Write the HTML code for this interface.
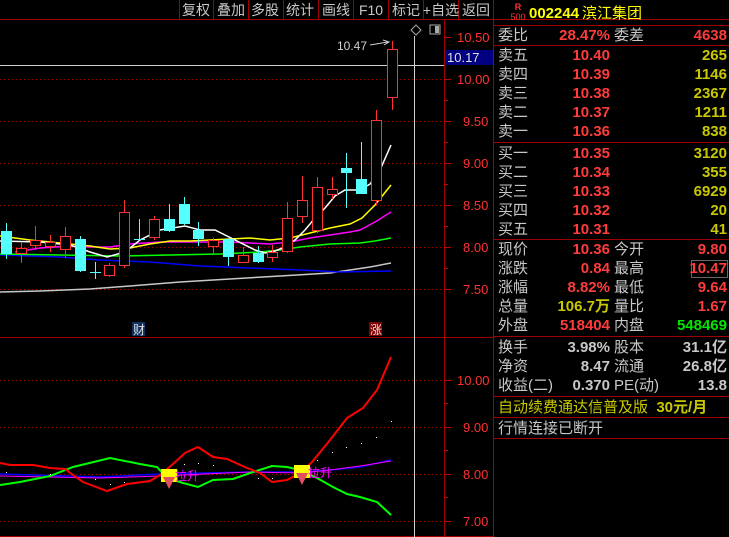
<!DOCTYPE html>
<html><head><meta charset="utf-8"><style>
*{margin:0;padding:0}
body{width:729px;height:537px;background:#000;overflow:hidden;position:relative;font-family:"Liberation Sans","Noto Sans CJK SC",sans-serif}
svg{position:absolute;left:0;top:0}
.r{position:absolute;left:494px;width:235px;height:19px;font-size:15px;line-height:19px;color:#c8c8c8}
.r span{position:absolute;white-space:nowrap}
.l1{left:4px}.v1{right:119px;text-align:right}.l2{left:120px}.v2{right:2px;text-align:right}
.red{color:#ff3c3c}.yel{color:#c8c800}.grn{color:#00e600}
.b{font-weight:bold}
</style></head><body>
<svg width="729" height="537" xmlns="http://www.w3.org/2000/svg" font-family="Liberation Sans, Noto Sans CJK SC, sans-serif">
<g stroke="#a00000" stroke-width="1">
<line x1="0" y1="19.5" x2="729" y2="19.5"/>
<line x1="179.5" y1="0" x2="179.5" y2="19"/><line x1="213.5" y1="0" x2="213.5" y2="19"/>
<line x1="248.5" y1="0" x2="248.5" y2="19"/><line x1="283.5" y1="0" x2="283.5" y2="19"/>
<line x1="318.5" y1="0" x2="318.5" y2="19"/><line x1="353.5" y1="0" x2="353.5" y2="19"/>
<line x1="388.5" y1="0" x2="388.5" y2="19"/><line x1="423.5" y1="0" x2="423.5" y2="19"/>
<line x1="458.5" y1="0" x2="458.5" y2="19"/><line x1="493.5" y1="0" x2="493.5" y2="537"/>
<line x1="444.5" y1="19" x2="444.5" y2="537"/>
<line x1="0" y1="337.5" x2="494" y2="337.5"/>
<line x1="0" y1="536.5" x2="494" y2="536.5"/>
</g>
<g fill="#c8c8c8" font-size="14" text-anchor="middle">
<text x="196" y="15">复权</text><text x="231" y="15">叠加</text><text x="265" y="15">多股</text>
<text x="300" y="15">统计</text><text x="336" y="15">画线</text><text x="371" y="15">F10</text>
<text x="406" y="15">标记</text><text x="441" y="15">+自选</text><text x="476" y="15">返回</text>
</g>
<g stroke="#a00000" stroke-dasharray="1,3">
<line x1="0" y1="79.5" x2="444" y2="79.5"/><line x1="0" y1="121.5" x2="444" y2="121.5"/>
<line x1="0" y1="163.5" x2="444" y2="163.5"/><line x1="0" y1="205.5" x2="444" y2="205.5"/>
<line x1="0" y1="247.5" x2="444" y2="247.5"/><line x1="0" y1="289.5" x2="444" y2="289.5"/>
<line x1="0" y1="380.5" x2="444" y2="380.5"/><line x1="0" y1="427.5" x2="444" y2="427.5"/>
<line x1="0" y1="474.5" x2="444" y2="474.5"/><line x1="0" y1="521.5" x2="444" y2="521.5"/>
</g>
<g fill="#ff3232" font-size="13">
<text x="457" y="42">10.50</text><text x="457" y="84">10.00</text><text x="463" y="126">9.50</text>
<text x="463" y="168">9.00</text><text x="463" y="210">8.50</text><text x="463" y="252">8.00</text>
<text x="463" y="294">7.50</text>
<text x="457" y="385">10.00</text><text x="463" y="432">9.00</text><text x="463" y="479">8.00</text><text x="463" y="526">7.00</text>
</g>
<g stroke="#c00000">
<line x1="444" y1="37.5" x2="451" y2="37.5"/><line x1="444" y1="79.5" x2="451" y2="79.5"/><line x1="444" y1="100.5" x2="448" y2="100.5"/>
<line x1="444" y1="121.5" x2="451" y2="121.5"/><line x1="444" y1="142.5" x2="448" y2="142.5"/><line x1="444" y1="163.5" x2="451" y2="163.5"/>
<line x1="444" y1="184.5" x2="448" y2="184.5"/><line x1="444" y1="205.5" x2="451" y2="205.5"/><line x1="444" y1="226.5" x2="448" y2="226.5"/>
<line x1="444" y1="247.5" x2="451" y2="247.5"/><line x1="444" y1="268.5" x2="448" y2="268.5"/><line x1="444" y1="289.5" x2="451" y2="289.5"/>
<line x1="444" y1="380.5" x2="451" y2="380.5"/><line x1="444" y1="403.5" x2="448" y2="403.5"/><line x1="444" y1="427.5" x2="451" y2="427.5"/>
<line x1="444" y1="450.5" x2="448" y2="450.5"/><line x1="444" y1="474.5" x2="451" y2="474.5"/><line x1="444" y1="497.5" x2="448" y2="497.5"/><line x1="444" y1="521.5" x2="451" y2="521.5"/>
</g>
<rect x="445" y="50" width="48" height="15" fill="#000080"/>
<text x="447" y="62" fill="#e0e0e0" font-size="13">10.17</text>
<line x1="0" y1="65.5" x2="444" y2="65.5" stroke="#d0d0d0"/>
<line x1="414.5" y1="36" x2="414.5" y2="537" stroke="#d0d0d0"/>
<path d="M416 25 L421 30 L416 35 L411 30Z" fill="none" stroke="#aaa"/>
<rect x="430" y="25" width="10" height="9" fill="none" stroke="#aaa"/><rect x="435" y="26" width="4" height="7" fill="#aaa"/>
<text x="337" y="50" fill="#d0d0d0" font-size="12">10.47</text>
<path d="M370 45 L388 42 M383 40 L389 42 L384 45" stroke="#d0d0d0" fill="none"/>
<g fill="none" stroke-width="1.5">
<polyline stroke="#c8c8c8" points="0,292 40,291 90,289 130,286 180,282 230,279 280,276 330,273 370,267 391,263"/>
<polyline stroke="#0000ff" points="0,255 60,257 100,260 150,262 200,266 250,268 300,270 340,272 391,271"/>
<polyline stroke="#00ff00" points="0,254 60,255 120,256 170,255 220,254 260,252 280,250 300,247 330,244 360,243 375,241 391,238"/>
<polyline stroke="#ff00ff" points="15,252 40,248 70,246 90,247 110,247 130,244 160,242 180,242 200,242 230,242 250,243 270,244 290,242 310,238 330,235 350,232 360,230 375,222 391,212"/>
<polyline stroke="#ffff00" points="0,236 30,240 60,243 90,246 110,249 130,248 150,244 170,241 190,241 230,239 250,238 270,240 290,238 310,233 330,228 350,224 362,218 375,205 391,185"/>
<polyline stroke="#ffffff" points="0,241 40,242 70,245 90,252 107,257 125,252 140,240 160,230 185,226 200,230 215,230 235,240 255,250 265,253 275,251 285,247 295,240 305,230 315,218 325,208 335,196 345,190 360,190 370,184 380,170 391,145"/>
</g>
<g stroke="#ff3232" fill="#000">
<path d="M21.5 242V263M35.5 226V250M50.5 235V252M65.5 227V258M109.5 263V277M124.5 200V268M154.5 216V240M213.5 238V254M243.5 247V263M272.5 245V262M287.5 202V253M302.5 176V223M317.5 177V233M332.5 177V199M376.5 110V205M392.5 41V110"/>
<rect x="16.5" y="248.5" width="10" height="5"/><rect x="30.5" y="240.5" width="10" height="5"/>
<rect x="45.5" y="242.5" width="10" height="4"/><rect x="60.5" y="236.5" width="10" height="13"/>
<rect x="104.5" y="265.5" width="10" height="10"/><rect x="119.5" y="212.5" width="10" height="53"/>
<rect x="149.5" y="219.5" width="10" height="18"/><rect x="208.5" y="240.5" width="10" height="6"/>
<rect x="238.5" y="255.5" width="10" height="7"/><rect x="267.5" y="252.5" width="10" height="5"/>
<rect x="282.5" y="218.5" width="10" height="33"/><rect x="297.5" y="200.5" width="10" height="16"/>
<rect x="312.5" y="187.5" width="10" height="43"/><rect x="327.5" y="189.5" width="10" height="5"/>
<rect x="371.5" y="120.5" width="10" height="80"/><rect x="387.5" y="49.5" width="10" height="48"/>
</g>
<g stroke="#54ffff" fill="#54ffff">
<path d="M6.5 223V259M80.5 236V272M95.5 262V279M90 272.5H101M139.5 219V240M134 239.5H145M169.5 204V232M184.5 197V225M198.5 222V246M228.5 239V266M258.5 246V263M346.5 153V208M361.5 142V194"/>
<rect x="1.5" y="231.5" width="10" height="22"/><rect x="75.5" y="239.5" width="10" height="31"/>
<rect x="164.5" y="219.5" width="10" height="11"/><rect x="179.5" y="204.5" width="10" height="19"/>
<rect x="193.5" y="230.5" width="10" height="8"/><rect x="223.5" y="239.5" width="10" height="17"/>
<rect x="253.5" y="253.5" width="10" height="8"/><rect x="341.5" y="168.5" width="10" height="4"/>
<rect x="356.5" y="179.5" width="10" height="14"/>
</g>
<rect x="132" y="322" width="13" height="14" fill="#103060"/><text x="133" y="334" fill="#e0e0e0" font-size="12">财</text>
<rect x="369" y="322" width="13" height="14" fill="#800000"/><text x="370" y="334" fill="#e0e0e0" font-size="12">涨</text>
<g fill="none" stroke-width="2">
<polyline stroke="#0000ff" stroke-width="1.5" points="0,474 100,477 160,474 250,472 300,472 330,470 360,467 391,460"/>
<polyline stroke="#ff00ff" stroke-width="1" points="0,476 100,478 160,476 250,472 300,473 330,470 360,466 391,461"/>
<polyline stroke="#00ff00" points="0,485 20,482 50,476 73,467 110,458 140,464 157,467 167,478 183,483 198,487 213,480 233,479 253,472 272,466 287,467 300,470 317,478 333,487 347,494 360,497 377,502 391,515"/>
<polyline stroke="#ff0000" points="0,463 10,465 33,465 50,468 65,469 73,475 83,482 107,491 127,484 150,481 160,475 173,464 185,453 198,447 213,457 227,459 247,468 260,473 272,482 287,480 300,473 312,462 330,440 347,418 363,408 377,390 391,357"/>
</g>
<g fill="#fff"><rect x="6" y="472" width="1" height="1"/><rect x="50" y="474" width="1" height="1"/><rect x="95" y="479" width="1" height="1"/><rect x="110" y="484" width="1" height="1"/><rect x="124" y="482" width="1" height="1"/><rect x="184" y="464" width="1" height="1"/><rect x="198" y="463" width="1" height="1"/><rect x="213" y="465" width="1" height="1"/><rect x="258" y="478" width="1" height="1"/><rect x="272" y="478" width="1" height="1"/><rect x="317" y="460" width="1" height="1"/><rect x="332" y="452" width="1" height="1"/><rect x="346" y="447" width="1" height="1"/><rect x="361" y="443" width="1" height="1"/><rect x="376" y="437" width="1" height="1"/><rect x="391" y="421" width="1" height="1"/></g>
<rect x="161" y="469" width="16" height="13" fill="#ffff00"/><rect x="294" y="465" width="16" height="13" fill="#ffff00"/>
<path d="M163 477H175L169 489Z" fill="#e05060"/><path d="M296 473H308L302 485Z" fill="#e05060"/>
<text x="175" y="480" fill="#ff00ff" font-size="12">拉升</text><text x="308" y="477" fill="#ff00ff" font-size="12">拉升</text>
<g stroke="#a00000">
<line x1="494" y1="25.5" x2="729" y2="25.5"/><line x1="494" y1="45.5" x2="729" y2="45.5"/>
<line x1="494" y1="142.5" x2="729" y2="142.5"/><line x1="494" y1="239.5" x2="729" y2="239.5"/>
<line x1="494" y1="336.5" x2="729" y2="336.5"/><line x1="494" y1="396.5" x2="729" y2="396.5"/>
<line x1="494" y1="417.5" x2="729" y2="417.5"/><line x1="494" y1="438.5" x2="729" y2="438.5"/>
</g>
<rect x="691.5" y="260.5" width="36" height="17" fill="none" stroke="#666"/>
<text x="518" y="10" fill="#ff3232" font-size="9" font-weight="bold" text-anchor="middle">R</text>
<text x="518" y="20" fill="#ff3232" font-size="9" text-anchor="middle">500</text>
<text x="529" y="18" fill="#ffff00" font-size="15" font-weight="bold">002244</text>
<text x="582" y="18" fill="#ffff00" font-size="15">滨江集团</text>
</svg>
<div class="r" style="top:26px"><span class="l1">委比</span><span class="v1 red b">28.47%</span><span class="l2">委差</span><span class="v2 red b">4638</span></div>
<div class="r" style="top:46px"><span class="l1">卖五</span><span class="v1 red b">10.40</span><span class="v2 yel b">265</span></div>
<div class="r" style="top:65px"><span class="l1">卖四</span><span class="v1 red b">10.39</span><span class="v2 yel b">1146</span></div>
<div class="r" style="top:84px"><span class="l1">卖三</span><span class="v1 red b">10.38</span><span class="v2 yel b">2367</span></div>
<div class="r" style="top:103px"><span class="l1">卖二</span><span class="v1 red b">10.37</span><span class="v2 yel b">1211</span></div>
<div class="r" style="top:122px"><span class="l1">卖一</span><span class="v1 red b">10.36</span><span class="v2 yel b">838</span></div>
<div class="r" style="top:144px"><span class="l1">买一</span><span class="v1 red b">10.35</span><span class="v2 yel b">3120</span></div>
<div class="r" style="top:163px"><span class="l1">买二</span><span class="v1 red b">10.34</span><span class="v2 yel b">355</span></div>
<div class="r" style="top:182px"><span class="l1">买三</span><span class="v1 red b">10.33</span><span class="v2 yel b">6929</span></div>
<div class="r" style="top:201px"><span class="l1">买四</span><span class="v1 red b">10.32</span><span class="v2 yel b">20</span></div>
<div class="r" style="top:220px"><span class="l1">买五</span><span class="v1 red b">10.31</span><span class="v2 yel b">41</span></div>
<div class="r" style="top:240px"><span class="l1">现价</span><span class="v1 red b">10.36</span><span class="l2">今开</span><span class="v2 red b">9.80</span></div>
<div class="r" style="top:259px"><span class="l1">涨跌</span><span class="v1 red b">0.84</span><span class="l2">最高</span><span class="v2 red b">10.47</span></div>
<div class="r" style="top:278px"><span class="l1">涨幅</span><span class="v1 red b">8.82%</span><span class="l2">最低</span><span class="v2 red b">9.64</span></div>
<div class="r" style="top:297px"><span class="l1">总量</span><span class="v1 yel b">106.7万</span><span class="l2">量比</span><span class="v2 red b">1.67</span></div>
<div class="r" style="top:316px"><span class="l1">外盘</span><span class="v1 red b">518404</span><span class="l2">内盘</span><span class="v2 grn b">548469</span></div>
<div class="r" style="top:338px"><span class="l1">换手</span><span class="v1 b">3.98%</span><span class="l2">股本</span><span class="v2 b">31.1亿</span></div>
<div class="r" style="top:357px"><span class="l1">净资</span><span class="v1 b">8.47</span><span class="l2">流通</span><span class="v2 b">26.8亿</span></div>
<div class="r" style="top:376px"><span class="l1">收益(二)</span><span class="v1 b">0.370</span><span class="l2">PE(动)</span><span class="v2 b">13.8</span></div>
<div class="r yel" style="top:398px"><span class="l1">自动续费通达信普及版&nbsp; <b>30元/月</b></span></div>
<div class="r" style="top:419px"><span class="l1">行情连接已断开</span></div>
</body></html>
